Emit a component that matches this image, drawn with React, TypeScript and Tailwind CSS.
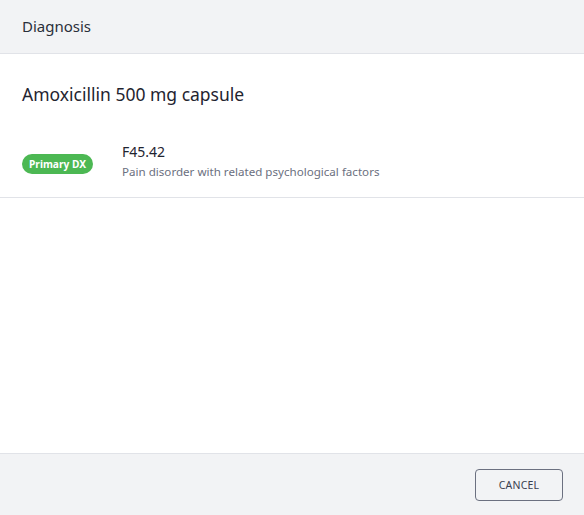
import React from "react";

export default function App() {
  return (
    <div className="flex h-[515px] w-[584px] flex-col bg-white text-[#1f2430]" style={{ fontFamily: '"Noto Sans", "Open Sans", sans-serif' }}>
      <div className="flex h-[54px] shrink-0 items-center border-b border-[#e1e3e8] bg-[#f2f3f5] px-[22px]">
        <span className="text-[15px] text-[#2a2f3a]">Diagnosis</span>
      </div>
      <div className="flex-1">
        <div className="border-b border-[#e1e3e8] px-[22px]">
          <h1 className="pt-[28px] text-[17.5px] leading-[24px] text-[#1f2430]">Amoxicillin 500 mg capsule</h1>
          <div className="flex items-center pb-[15px] pt-[36px]">
            <div className="w-[100px]">
              <span className="inline-flex h-[20px] items-center rounded-full bg-[#4cb853] px-[7px] text-[10.2px] font-bold text-white">Primary DX</span>
            </div>
            <div className="flex flex-col">
              <span className="text-[14px] leading-[20px] text-[#1f2430]">F45.42</span>
              <span className="text-[11.6px] leading-[20px] text-[#6b7080]">Pain disorder with related psychological factors</span>
            </div>
          </div>
        </div>
      </div>
      <div className="flex h-[62px] shrink-0 items-center justify-end border-t border-[#e1e3e8] bg-[#f2f3f5] px-[21px]">
        <button className="h-[32px] w-[88px] rounded-[4px] border border-[#6b7080] bg-[#f2f3f5] pt-[2px] text-[10.5px] tracking-[0.02em] text-[#3a4050]">CANCEL</button>
      </div>
    </div>
  );
}
